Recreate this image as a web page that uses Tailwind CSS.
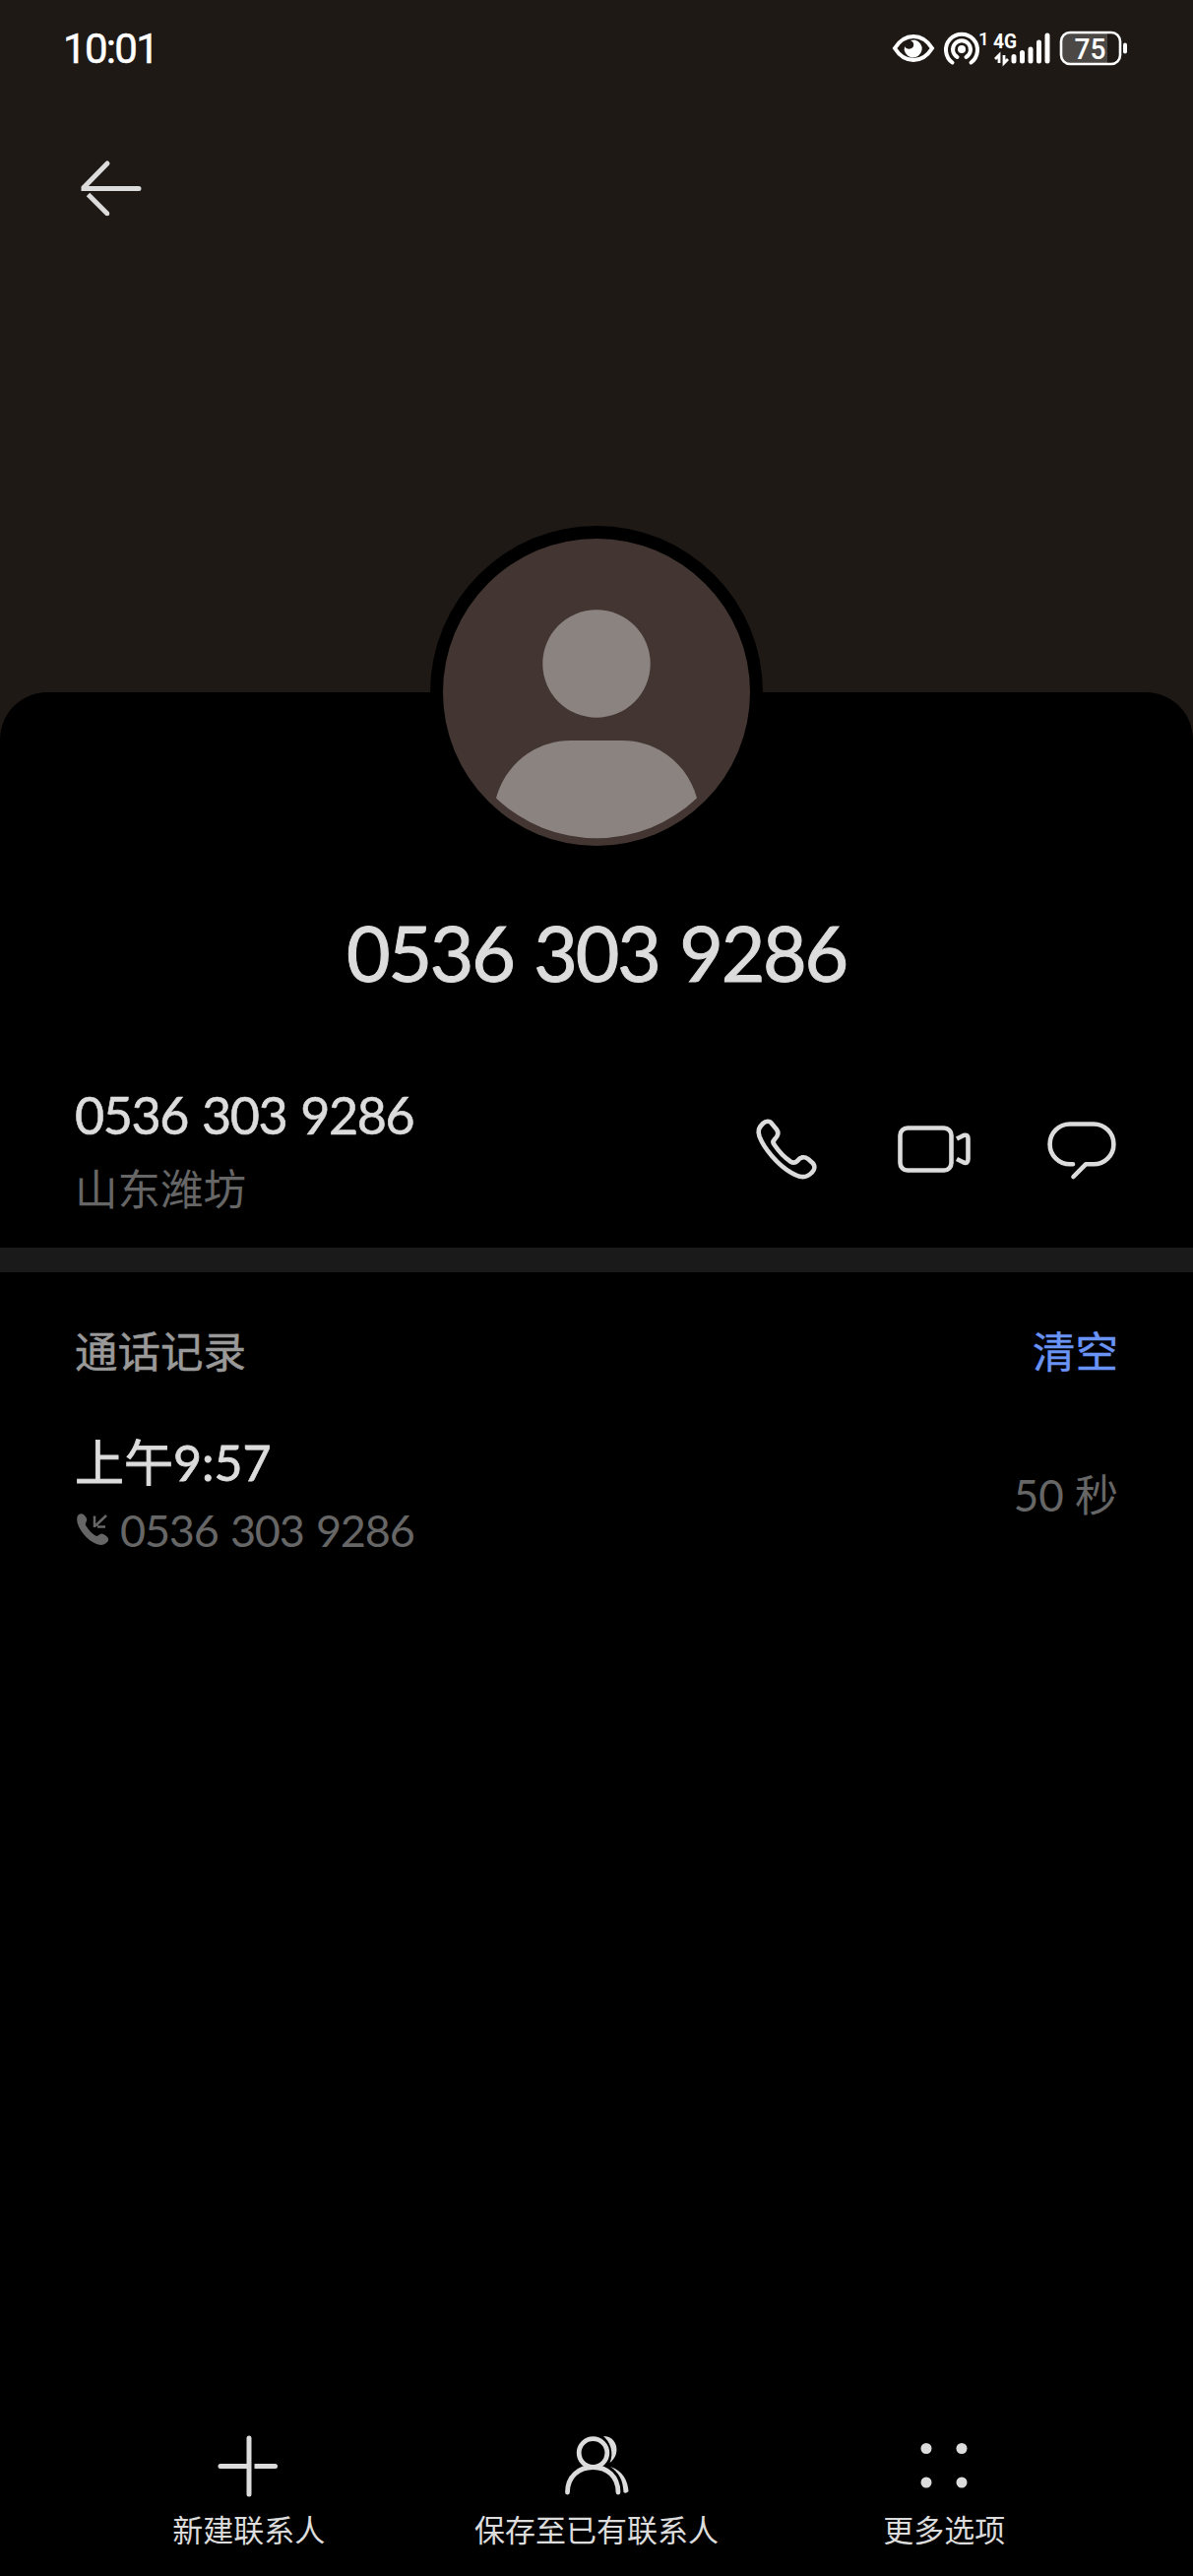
<!DOCTYPE html>
<html lang="zh-CN">
<head>
  <meta charset="UTF-8" />
  <meta name="viewport" content="width=device-width, initial-scale=1.0"/>
  <title>0536 303 9286</title>
  <script src="https://cdn.jsdelivr.net/npm/@tailwindcss/browser@4"></script>
</head>
<body class="bg-[#1e1915] text-[#dcdcdc] font-['Lato','Noto_Sans_CJK_SC',sans-serif]">
<div class="w-[1212px] h-[2616px] flex flex-col overflow-hidden">

  <!-- Status bar -->
  <header class="h-[100px] shrink-0 flex items-center justify-between pl-[64px] pr-[66px] text-white">
    <span class="font-['Roboto'] text-[42px] leading-none tracking-[-1.700px] [-webkit-text-stroke:.5px_#fff]">10:01</span>
    <svg class="w-[240px] h-[60px]" viewBox="906 20 240 60" fill="none" stroke="#fff">
      <!-- eye -->
      <path d="M909 49C914 41 921 37 928 37S942 41 947 49C942 57 935 61 928 61S914 57 909 49Z" stroke-width="4"/>
      <path d="M929 40.500A9 9 0 1 1 919 47C920 50 926 51 928 47C929 44 927 42 925 41Z" fill="#fff" stroke="none"/>
      <!-- hotspot -->
      <circle cx="977" cy="50" r="4" fill="#fff" stroke="none"/>
      <path d="M972.500 58A9 9 0 1 1 981.500 58M967.500 63.500A16 16 0 1 1 986.500 63.500" stroke-width="4" stroke-linecap="round"/>
      <text x="994" y="46" font-family="Roboto" font-size="19" font-weight="500" fill="#fff" stroke="none">1</text>
      <!-- signal -->
      <text x="1009" y="49" font-family="Roboto" font-size="21" font-weight="700" fill="#fff" stroke="none" textLength="24" lengthAdjust="spacingAndGlyphs">4G</text>
      <path d="M1015 64V56L1011 60M1020 56V64L1024 60" stroke-width="2.800"/>
      <path d="M1030 57.500V62M1038.500 53.500V62M1047 50V62M1055.500 43V62M1064 36V62" stroke-width="5" stroke-linecap="round"/>
      <!-- battery -->
      <path d="M1087 34H1125V64H1087Q1079 64 1079 56V42Q1079 34 1087 34Z" fill="#4c4845" stroke="none"/>
      <rect x="1078" y="33" width="60" height="32" rx="9" stroke-width="2.600"/>
      <path d="M1143 45.500V52.500" stroke-width="4" stroke-linecap="round"/>
      <text x="1091.500" y="60" font-family="Roboto" font-size="30" font-weight="500" fill="#fff" stroke="none" textLength="32" lengthAdjust="spacingAndGlyphs">75</text>
    </svg>
  </header>

  <div class="h-[603px] shrink-0 pl-[80px] pt-[60px]">
    <svg class="w-[66px] h-[62px]" viewBox="80 160 66 62" fill="none" stroke="#dcdcdc" stroke-width="5" stroke-linecap="round">
      <path d="M109 166L85 190.500V191.500H141"/>
      <path d="M89.500 197.500L109 217" stroke-linecap="butt"/>
      <circle cx="109" cy="217" r="2.300" fill="#dcdcdc" stroke="none"/>
    </svg>
  </div>

  <!-- Contact card -->
  <main class="grow bg-black rounded-t-[48px] flex flex-col">
    <div class="flex flex-col items-center">
      <div class="-mt-[169px] w-[338px] h-[338px] rounded-full bg-black p-[13px]">
        <svg class="w-[312px] h-[312px]" viewBox="0 0 312 312">
          <circle cx="156" cy="156" r="156" fill="#433632"/>
          <circle cx="156" cy="127" r="54.700" fill="#8b8380"/>
          <path d="M130 205H182C219 205 249 230 258 263.500A148 148 0 0 1 54 263.500C63 230 93 205 130 205Z" fill="#8b8380"/>
        </svg>
      </div>
      <h1 class="mt-[49px] text-[77px] leading-[92px] tracking-[-2.200px] [word-spacing:3px] [-webkit-text-stroke:1px_#dcdcdc]">0536 303 9286</h1>
    </div>

    <section class="mt-[89px] h-[165px] shrink-0 pl-[76px] pr-[76px] flex justify-between">
      <div>
        <p class="text-[52px] leading-[60px] tracking-[-1.400px] [word-spacing:2px] [-webkit-text-stroke:.6px_#dcdcdc]">0536 303 9286</p>
        <p class="mt-[14px] text-[43.500px] leading-[60px] text-[#666] font-['Noto_Sans_CJK_SC']">山东潍坊</p>
      </div>
      <svg class="mt-[30px] w-[370px] h-[70px]" viewBox="766 1132 370 70" fill="none" stroke="#dcdcdc" stroke-width="4.600" stroke-linecap="round" stroke-linejoin="round">
        <path d="M775 1141C778 1138 782 1138 784 1141L789 1147C792 1151 790 1154 787 1157C785 1159 785 1161 787 1163C791 1169 798 1176 803 1179.500C806 1181.500 808 1181 810 1179C813 1175 817 1174 821 1177L825.500 1181C828.500 1184 827.500 1188 825 1190.500C818 1198 811 1195 804 1191C790 1183 776 1166 771.500 1154C769.500 1148 771 1145 775 1141Z"/>
        <rect x="914.500" y="1145.500" width="52" height="43" rx="7.500"/>
        <path d="M972 1156.500L979 1153Q983.500 1152 983.500 1156V1177Q983.500 1182 979 1180.500L972 1177" stroke-linecap="butt"/>
        <path d="M1090 1182.300H1087A20.300 20.300 0 0 1 1087 1141.500H1111A20.300 20.300 0 0 1 1111 1182.300H1103L1090.500 1195"/>
      </svg>
    </section>

    <div class="h-[25px] shrink-0 bg-[#1a1a1a]"></div>

    <!-- Call log -->
    <section class="px-[76px] pt-[49px]">
      <div class="flex justify-between text-[43.500px] leading-[60px] font-['Noto_Sans_CJK_SC']">
        <h2 class="text-[#999] [-webkit-text-stroke:.5px_#999]">通话记录</h2>
        <a href="#" class="text-[#6993f5] [-webkit-text-stroke:.4px_#6993f5]">清空</a>
      </div>
      <div class="mt-[48px] flex justify-between items-center">
        <div>
          <p class="text-[50px] leading-[72px] [-webkit-text-stroke:.8px_#dcdcdc]">上午9:57</p>
          <p class="mt-[3px] flex items-center text-[45px] leading-[60px] text-[#666] tracking-[-1.200px] [word-spacing:2px]">
            <svg class="w-[34px] h-[34px] mr-[12px]" viewBox="76 1537 34 34" fill="none" stroke="#666" stroke-width="2.500">
              <path d="M80 1538C83 1536 86 1538 88 1542C89 1545 86 1547 87 1549C90 1554 94 1558 98 1560C100 1560 102 1556 105 1558C109 1560 112 1563 109 1566C104 1571 98 1569 91 1564C85 1559 80 1552 78.500 1546C78 1542 78 1540 80 1538Z" fill="#666" stroke="none"/>
              <path d="M108 1539L97 1549.500M96 1539.500V1551M99 1550.500H107"/>
            </svg>
            <span>0536 303 9286</span>
          </p>
        </div>
        <span class="mt-[2px] text-[44px] text-[#666]">50 秒</span>
      </div>
    </section>

    <!-- Bottom actions -->
    <nav class="mt-auto h-[156px] shrink-0 px-[76px] grid grid-cols-3 text-[31px] leading-[35px] font-['Noto_Sans_CJK_SC']">
      <a href="#" class="flex flex-col items-center">
        <svg class="w-[90px] h-[90px]" viewBox="0 0 90 90" fill="none" stroke="#dcdcdc" stroke-width="5" stroke-linecap="round">
          <path d="M45 16V73M16 44.500H45"/><path d="M50.500 44.500H71" stroke-linecap="butt"/><circle cx="71.500" cy="44.500" r="2.500" fill="#dcdcdc" stroke="none"/>
        </svg>
        新建联系人
      </a>
      <a href="#" class="flex flex-col items-center">
        <svg class="w-[90px] h-[90px]" viewBox="561 2460 90 90" fill="none" stroke="#dcdcdc" stroke-width="4.800" stroke-linecap="round">
          <circle cx="602.500" cy="2491" r="14.300"/>
          <path d="M576.500 2531C576.500 2515 588 2505.500 602.500 2505.500S628 2515 628 2531"/>
          <path d="M613 2474C628 2474 631 2493 619.500 2501C624 2491 620 2480 613 2474ZM620 2505C633 2509 638 2520 638.500 2530Q636 2533 633.500 2531C633 2519 629 2511 620 2505Z" fill="#dcdcdc" stroke="none"/>
        </svg>
        保存至已有联系人
      </a>
      <a href="#" class="flex flex-col items-center">
        <svg class="w-[90px] h-[90px]" viewBox="0 0 90 90" fill="#dcdcdc">
          <circle cx="27" cy="26.500" r="5.500"/><circle cx="63" cy="26.500" r="5.500"/>
          <circle cx="27" cy="61" r="5.500"/><circle cx="63" cy="61" r="5.500"/>
        </svg>
        更多选项
      </a>
    </nav>
  </main>
</div>
</body>
</html>
